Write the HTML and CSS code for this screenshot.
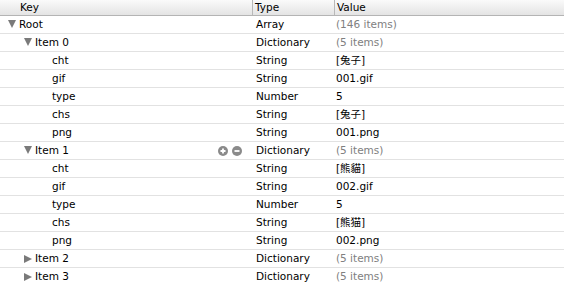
FILE: index.html
```html
<!DOCTYPE html>
<html lang="en">
<head>
    <meta charset="UTF-8">
    <title>Plist Editor</title>
    <link rel="stylesheet" href="styles.css">
</head>
<body>
    <div class="plist">
        <div class="head row">
            <div class="key">Key</div>
            <div class="type">Type</div>
            <div class="value">Value</div>
        </div>

        <div class="row">
            <div class="key lvl0"><span class="tri open"></span>Root</div>
            <div class="type">Array</div>
            <div class="value muted">(146 items)</div>
        </div>

        <!-- Item 0 -->
        <div class="row">
            <div class="key lvl1"><span class="tri open"></span>Item 0</div>
            <div class="type">Dictionary</div>
            <div class="value muted">(5 items)</div>
        </div>
        <div class="row">
            <div class="key lvl2">cht</div>
            <div class="type">String</div>
            <div class="value">[兔子]</div>
        </div>
        <div class="row">
            <div class="key lvl2">gif</div>
            <div class="type">String</div>
            <div class="value">001.gif</div>
        </div>
        <div class="row">
            <div class="key lvl2">type</div>
            <div class="type">Number</div>
            <div class="value">5</div>
        </div>
        <div class="row">
            <div class="key lvl2">chs</div>
            <div class="type">String</div>
            <div class="value">[兔子]</div>
        </div>
        <div class="row">
            <div class="key lvl2">png</div>
            <div class="type">String</div>
            <div class="value">001.png</div>
        </div>

        <!-- Item 1 -->
        <div class="row">
            <div class="key lvl1">
                <span class="tri open"></span>Item 1
                <span class="btns">
                    <svg width="10" height="10" viewBox="0 0 10 10"><circle cx="5" cy="5" r="5" fill="#8a8a8a"/><path d="M2.5 5h5M5 2.5v5" stroke="#fff" stroke-width="1.8"/></svg>
                    <svg width="10" height="10" viewBox="0 0 10 10"><circle cx="5" cy="5" r="5" fill="#8a8a8a"/><path d="M2.5 5h5" stroke="#fff" stroke-width="1.8"/></svg>
                </span>
            </div>
            <div class="type">Dictionary</div>
            <div class="value muted">(5 items)</div>
        </div>
        <div class="row">
            <div class="key lvl2">cht</div>
            <div class="type">String</div>
            <div class="value">[熊貓]</div>
        </div>
        <div class="row">
            <div class="key lvl2">gif</div>
            <div class="type">String</div>
            <div class="value">002.gif</div>
        </div>
        <div class="row">
            <div class="key lvl2">type</div>
            <div class="type">Number</div>
            <div class="value">5</div>
        </div>
        <div class="row">
            <div class="key lvl2">chs</div>
            <div class="type">String</div>
            <div class="value">[熊猫]</div>
        </div>
        <div class="row">
            <div class="key lvl2">png</div>
            <div class="type">String</div>
            <div class="value">002.png</div>
        </div>

        <div class="row">
            <div class="key lvl1"><span class="tri"></span>Item 2</div>
            <div class="type">Dictionary</div>
            <div class="value muted">(5 items)</div>
        </div>
        <div class="row">
            <div class="key lvl1"><span class="tri"></span>Item 3</div>
            <div class="type">Dictionary</div>
            <div class="value muted">(5 items)</div>
        </div>
    </div>
</body>
</html>
```

FILE: styles.css
```css
body{
    margin: 0;
    background: #fff;
    font-family: "DejaVu Sans", "Noto Sans CJK TC", sans-serif;
    font-size: 10.5px;
    color: #000;
}

.plist{
    width: 564px;
}

.row{
    display: grid;
    grid-template-columns: 252px 82px 1fr;
    height: 17px;
    line-height: 17px;
    border-bottom: 1px solid #e2e2e2;
}

.head{
    height: 15px;
    line-height: 15px;
    background: linear-gradient(#fafafa, #e4e4e4);
    border-bottom: 1px solid #b4b4b4;

    .key{
        padding-left: 20px;
    }
    .type, .value{
        border-left: 1px solid #b8b8b8;
        padding-left: 2px;
    }
}

.key{
    position: relative;
    white-space: nowrap;
}
.lvl0{ padding-left: 8px; }
.lvl1{ padding-left: 24px; }
.lvl2{ padding-left: 52px; }

.type{
    padding-left: 4px;
}
.value{
    padding-left: 2px;
}
.muted{
    color: #808080;
}

.tri{
    display: inline-block;
    width: 0;
    height: 0;
    margin-right: 3px;
    border-top: 4px solid transparent;
    border-bottom: 4px solid transparent;
    border-left: 8px solid #7a7a7a;
    vertical-align: -1px;
}
.tri.open{
    border-left: 4px solid transparent;
    border-right: 4px solid transparent;
    border-top: 8px solid #7a7a7a;
    border-bottom: 0;
    vertical-align: 0;
}

.btns{
    position: absolute;
    left: 218px;
    top: 0;
    display: flex;
    gap: 4px;
    align-items: center;
    height: 17px;
}
.btns svg{
    display: block;
}
```
